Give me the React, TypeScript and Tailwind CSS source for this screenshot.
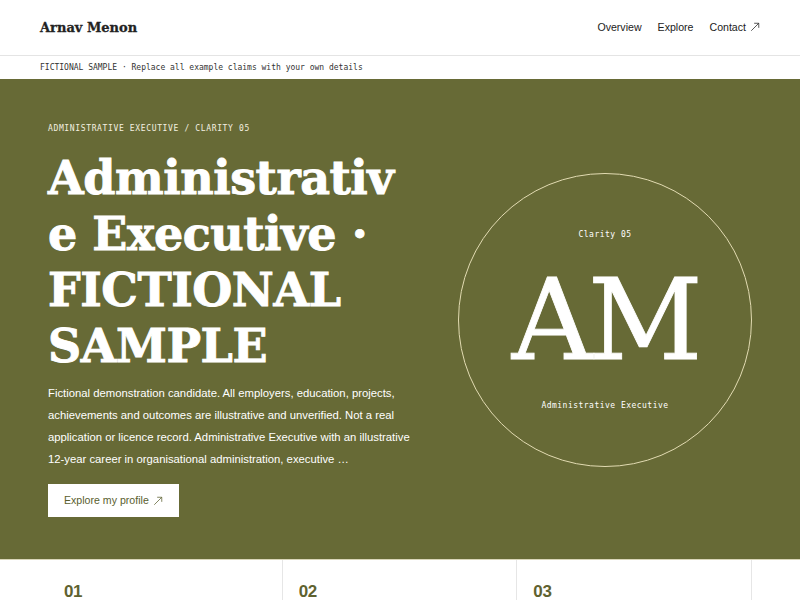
import React from 'react'

const mono = "font-['DejaVu_Sans_Mono','Liberation_Mono',monospace]"
const serif = "font-['DejaVu_Serif','Liberation_Serif',serif]"

function Arrow({ className = '' }: { className?: string }) {
  return (
    <svg viewBox="0 0 12 12" className={className} fill="none" stroke="currentColor" strokeWidth="0.9">
      <path d="M1.5 10.5 L10.5 1.5" />
      <path d="M5 1.5 H10.5 V7" />
    </svg>
  )
}

const steps = ['01', '02', '03']

export default function App() {
  return (
    <div className="min-h-screen bg-white font-['Liberation_Sans',Arial,sans-serif] text-[#1f1f1f]">
      {/* top bar */}
      <header className="h-[56px] px-10 flex items-center justify-between border-b border-[#e4e4e4]">
        <span className={`${serif} font-bold text-[13px] text-[#222] [-webkit-text-stroke:0.3px_#222]`}>Arnav Menon</span>
        <nav className="flex items-center gap-4 text-[10.6px] text-[#222]">
          <a>Overview</a>
          <a>Explore</a>
          <a className="flex items-center gap-1">
            Contact <Arrow className="w-[10px] h-[10px]" />
          </a>
        </nav>
      </header>

      <div className={`${mono} h-[23px] px-10 flex items-center text-[8px] text-[#333]`}>
        FICTIONAL SAMPLE · Replace all example claims with your own details
      </div>

      {/* hero */}
      <section className="bg-[#676a36] px-12 pt-[44px] pb-[42px] flex items-center justify-between border-b border-[#d9d5b8]">
        <div className="w-[364px]">
          <p className={`${mono} text-[8px] tracking-[0.08em] text-[#f3f0e0]`}>
            ADMINISTRATIVE EXECUTIVE / CLARITY 05
          </p>
          <h1 className={`${serif} mt-[15px] font-bold text-[46px] leading-[56px] tracking-[-0.01em] text-white break-words [-webkit-text-stroke:0.9px_white]`}>
            Administrative Executive · FICTIONAL SAMPLE
          </h1>
          <p className="mt-[8px] text-[11.3px] leading-[22px] text-white">
            Fictional demonstration candidate. All employers, education, projects, achievements and outcomes are
            illustrative and unverified. Not a real application or licence record. Administrative Executive with an
            illustrative 12-year career in organisational administration, executive …
          </p>
          <button className="mt-[14px] h-[33px] px-4 bg-white text-[#5a5e2e] text-[10.6px] flex items-center gap-1">
            Explore my profile <Arrow className="w-[10px] h-[10px]" />
          </button>
        </div>

        <div className="w-[294px] h-[294px] rounded-full border border-[#e2dbb2] flex flex-col items-center justify-center text-white">
          <span className={`${mono} text-[8px] tracking-[0.06em]`}>Clarity 05</span>
          <span className={`${serif} mt-[22px] text-[112px] leading-[114px] tracking-[-0.04em] [-webkit-text-stroke:0.8px_white]`}>AM</span>
          <span className={`${mono} mt-[23px] text-[8px] tracking-[0.06em]`}>Administrative Executive</span>
        </div>
      </section>

      {/* steps */}
      <section className="mx-12 grid grid-cols-3">
        {steps.map((s) => (
          <div key={s} className="border-r border-[#e6e6e6] px-4 pt-[19px] pb-6">
            <span className="font-bold text-[17px] text-[#5f6230] tracking-[-0.02em]">{s}</span>
          </div>
        ))}
      </section>
    </div>
  )
}
